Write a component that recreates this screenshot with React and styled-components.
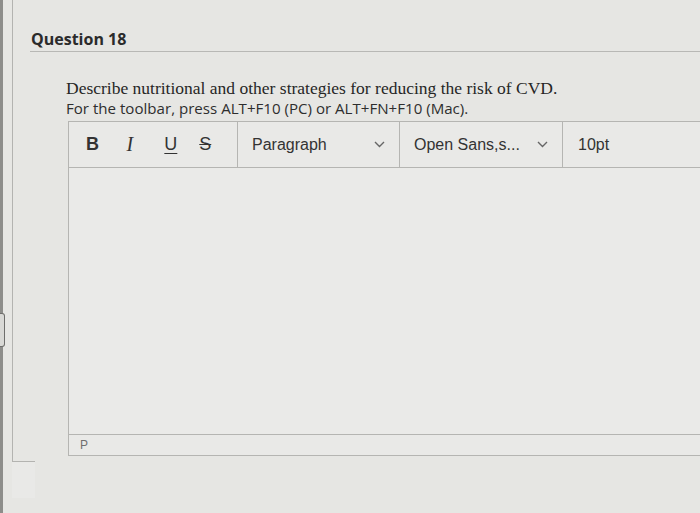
import styled, { createGlobalStyle } from 'styled-components';

const GlobalStyle = createGlobalStyle`
  html, body {
    margin: 0;
    padding: 0;
    background: #e6e6e3;
    overflow: hidden;
  }
`;

const Page = styled.div`
  display: flex;
  width: 700px;
  height: 513px;
  overflow: hidden;
  background: #e6e6e3;
`;

const Edge = styled.div`
  width: 3px;
  flex-shrink: 0;
  background: #8d8d8a;
  display: flex;
  flex-direction: column;
`;

const EdgeTab = styled.div`
  margin-top: 313px;
  width: 4px;
  height: 32px;
  border: 1px solid #6e6e6c;
  border-left: none;
  border-radius: 0 3px 3px 0;
  background: #d9d9d6;
`;

const Column = styled.div`
  margin-left: 9px;
  flex: 1;
  display: flex;
  flex-direction: column;
  min-width: 0;
`;

const Panel = styled.div`
  height: 461px;
  border-left: 1px solid #b3b3b0;
  padding: 28px 0 0 18px;
  box-sizing: border-box;
  display: flex;
  flex-direction: column;
`;

const Foot = styled.div`
  width: 23px;
  height: 36px;
  border-top: 1px solid #b3b3b0;
  background: #e9e9e7;
`;

const Heading = styled.h2`
  margin: 0;
  font-family: 'Open Sans', sans-serif;
  font-weight: 700;
  font-size: 16px;
  line-height: 22px;
  color: #2b2b2b;
`;

const Rule = styled.div`
  height: 0;
  border-top: 1px solid #b8b8b5;
  margin: 1px 0 0 -1px;
`;

const Body = styled.div`
  padding: 26px 0 0 35px;
  display: flex;
  flex-direction: column;
`;

const Prompt = styled.p`
  margin: 0;
  font-family: 'Liberation Serif', serif;
  font-size: 17.5px;
  line-height: 20px;
  color: #262626;
`;

const Hint = styled.p`
  margin: 0;
  font-family: 'Open Sans', sans-serif;
  font-size: 15.1px;
  line-height: 20px;
  color: #2e2e2e;
`;

const Editor = styled.div`
  margin: 3px 0 0 2px;
  width: 660px;
  border: 1px solid #b5b5b2;
  border-right: none;
  display: flex;
  flex-direction: column;
  background: #e9e9e7;
`;

const Toolbar = styled.div`
  display: flex;
  height: 45px;
  border-bottom: 1px solid #b5b5b2;
`;

const Group = styled.div`
  width: ${(p) => p.$w}px;
  flex-shrink: 0;
  display: flex;
  align-items: center;
  padding-left: ${(p) => p.$pad}px;
  box-sizing: border-box;
  border-right: ${(p) => (p.$last ? 'none' : '1px solid #b5b5b2')};
`;

const FormatButton = styled.span`
  width: ${(p) => p.$w || 40}px;
  text-align: left;
  font-family: ${(p) => (p.$serif ? "'Liberation Serif', serif" : "'Liberation Sans', sans-serif")};
  font-size: ${(p) => (p.$serif ? 20 : 18)}px;
  font-weight: ${(p) => (p.$bold ? 700 : 400)};
  font-style: ${(p) => (p.$italic ? 'italic' : 'normal')};
  text-decoration: ${(p) => p.$deco || 'none'};
  text-underline-offset: 3px;
  color: #333;
`;

const SelectText = styled.span`
  flex: 1;
  font-family: 'Liberation Sans', sans-serif;
  font-size: 16px;
  color: #333;
`;

const Chevron = styled.svg`
  width: 11px;
  height: 7px;
  margin-right: 14px;
`;

const EditArea = styled.div`
  height: 266px;
  border-bottom: 1px solid #b5b5b2;
  background: #eaeae8;
`;

const StatusBar = styled.div`
  height: 20px;
  display: flex;
  align-items: center;
  padding-left: 11px;
  font-family: 'Liberation Sans', sans-serif;
  font-size: 12px;
  color: #6f6f6f;
`;

const Arrow = () => (
  <Chevron viewBox="0 0 11 7">
    <path d="M1 1l4.5 4.5L10 1" fill="none" stroke="#666" strokeWidth="1.4" />
  </Chevron>
);

export default function App() {
  return (
    <>
      <GlobalStyle />
      <Page>
        <Edge>
          <EdgeTab />
        </Edge>
        <Column>
          <Panel>
            <Heading>Question 18</Heading>
            <Rule />
            <Body>
              <Prompt>Describe nutritional and other strategies for reducing the risk of CVD.</Prompt>
              <Hint>For the toolbar, press ALT+F10 (PC) or ALT+FN+F10 (Mac).</Hint>
              <Editor>
                <Toolbar>
                  <Group $w={169} $pad={17}>
                    <FormatButton $bold $w={43}>B</FormatButton>
                    <FormatButton $serif $italic>I</FormatButton>
                    <FormatButton $deco="underline" $w={37}>U</FormatButton>
                    <FormatButton $deco="line-through">S</FormatButton>
                  </Group>
                  <Group $w={162} $pad={14}>
                    <SelectText>Paragraph</SelectText>
                    <Arrow />
                  </Group>
                  <Group $w={163} $pad={14}>
                    <SelectText>Open Sans,s...</SelectText>
                    <Arrow />
                  </Group>
                  <Group $w={166} $pad={15} $last>
                    <SelectText>10pt</SelectText>
                  </Group>
                </Toolbar>
                <EditArea />
                <StatusBar>P</StatusBar>
              </Editor>
            </Body>
          </Panel>
          <Foot />
        </Column>
      </Page>
    </>
  );
}
